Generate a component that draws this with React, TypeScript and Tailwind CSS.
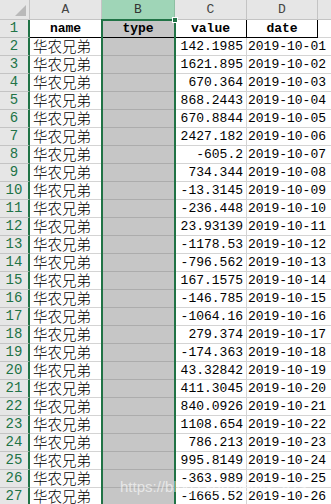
import React from 'react';

const rows: [string, string][] = [
  ['142.1985', '2019-10-01'],
  ['1621.895', '2019-10-02'],
  ['670.364', '2019-10-03'],
  ['868.2443', '2019-10-04'],
  ['670.8844', '2019-10-05'],
  ['2427.182', '2019-10-06'],
  ['-605.2', '2019-10-07'],
  ['734.344', '2019-10-08'],
  ['-13.3145', '2019-10-09'],
  ['-236.448', '2019-10-10'],
  ['23.93139', '2019-10-11'],
  ['-1178.53', '2019-10-12'],
  ['-796.562', '2019-10-13'],
  ['167.1575', '2019-10-14'],
  ['-146.785', '2019-10-15'],
  ['-1064.16', '2019-10-16'],
  ['279.374', '2019-10-17'],
  ['-174.363', '2019-10-18'],
  ['43.32842', '2019-10-19'],
  ['411.3045', '2019-10-20'],
  ['840.0926', '2019-10-21'],
  ['1108.654', '2019-10-22'],
  ['786.213', '2019-10-23'],
  ['995.8149', '2019-10-24'],
  ['-363.989', '2019-10-25'],
  ['-1665.52', '2019-10-26'],
];

const mono = "font-['Liberation_Mono',monospace]";
const cjk = "font-['Noto_Sans_CJK_SC',sans-serif]";

export default function App() {
  return (
    <div className="relative w-[331px] h-[504px] overflow-hidden bg-white text-black">
      {/* column letters */}
      <div className="flex h-[20px]">
        <div className="w-[30px] shrink-0 bg-[#e6e6e6] border-r border-b border-[#c4c4c4] flex items-end justify-end p-[3px]">
          <svg width="11" height="11" viewBox="0 0 11 11">
            <polygon points="11,0 11,11 0,11" fill="#b9b9b9" />
          </svg>
        </div>
        <div className={`w-[72px] shrink-0 bg-[#e6e6e6] border-r border-b border-[#c4c4c4] flex items-center justify-center text-[13px] text-[#444] ${mono}`}>A</div>
        <div className={`w-[73px] shrink-0 bg-[#9fd5b7] border-r border-b border-[#8ebfa3] flex items-center justify-center text-[13px] text-[#333] ${mono}`}>B</div>
        <div className={`w-[72px] shrink-0 bg-[#e6e6e6] border-r border-b border-[#c4c4c4] flex items-center justify-center text-[13px] text-[#444] ${mono}`}>C</div>
        <div className={`w-[71px] shrink-0 bg-[#e6e6e6] border-r border-b border-[#c4c4c4] flex items-center justify-center text-[13px] text-[#444] ${mono}`}>D</div>
        <div className="flex-1 bg-[#e6e6e6] border-b border-[#c4c4c4]" />
      </div>

      {/* row 1 : headings */}
      <div className="flex h-[18px]">
        <div className={`w-[30px] shrink-0 bg-[#e6e6e6] border-b border-[#c4c4c4] border-r-2 border-r-[#217346] flex items-center justify-center text-[14px] text-[#217346] ${mono}`}>1</div>
        <div className={`w-[72px] shrink-0 border-r border-b border-black flex items-center justify-center text-[13px] font-bold ${mono}`}>name</div>
        <div className={`w-[73px] shrink-0 bg-[#c6c6c6] border-r border-b border-black flex items-center justify-center text-[13px] font-bold ${mono}`}>type</div>
        <div className={`w-[72px] shrink-0 border-r border-b border-black flex items-center justify-center text-[13px] font-bold ${mono}`}>value</div>
        <div className={`w-[71px] shrink-0 border-r border-b border-black flex items-center justify-center text-[13px] font-bold ${mono}`}>date</div>
        <div className="flex-1 border-b border-[#d4d4d4]" />
      </div>

      {rows.map(([value, date], i) => (
        <div key={i} className="flex h-[18px]">
          <div className={`w-[30px] shrink-0 bg-[#e6e6e6] border-b border-[#c4c4c4] border-r-2 border-r-[#217346] flex items-center justify-center text-[14px] text-[#217346] ${mono}`}>{i + 2}</div>
          <div className={`w-[72px] shrink-0 border-r border-b border-[#d4d4d4] flex items-center pl-[3px] text-[14.5px] leading-none font-light ${cjk}`}>华农兄弟</div>
          <div className="w-[73px] shrink-0 bg-[#c6c6c6] border-r border-b border-[#acacac]" />
          <div className={`w-[72px] shrink-0 border-r border-b border-[#d4d4d4] flex items-center justify-end pr-[3px] text-[13px] ${mono}`}>{value}</div>
          <div className={`w-[71px] shrink-0 border-b border-[#d4d4d4] flex items-center pl-[1px] whitespace-nowrap text-[13px] ${mono}`}>{date}</div>
          <div className="flex-1 border-b border-[#d4d4d4]" />
        </div>
      ))}

      {/* column B selection outline */}
      <div className="absolute left-[101px] top-[19px] w-[75px] h-[500px] border-2 border-[#217346] pointer-events-none" />
      <div className="absolute left-[172px] top-[17px] w-[6px] h-[6px] bg-[#217346] border border-white pointer-events-none" />

      {/* watermark */}
      <div className="absolute left-[120px] top-[476px] text-[15px] text-white/60 whitespace-nowrap font-['Liberation_Sans',sans-serif] pointer-events-none">
        https://blog.csdn.net/ys_823
      </div>
    </div>
  );
}
